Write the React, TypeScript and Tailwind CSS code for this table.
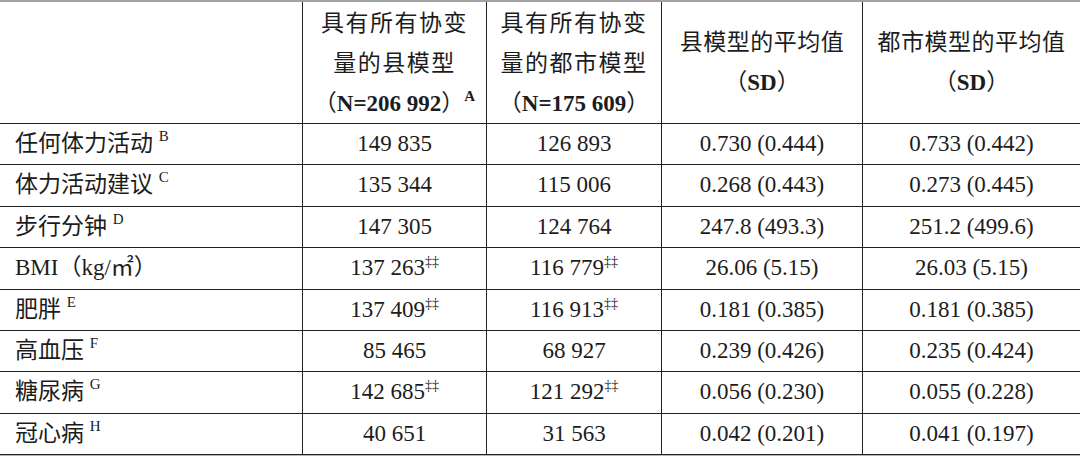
import React from 'react';

const rows = [
  { label: '任何体力活动', note: 'B', county: '149 835', metro: '126 893', cMean: '0.730 (0.444)', mMean: '0.733 (0.442)', h: 'h-[41px]' },
  { label: '体力活动建议', note: 'C', county: '135 344', metro: '115 006', cMean: '0.268 (0.443)', mMean: '0.273 (0.445)', h: 'h-[42px]' },
  { label: '步行分钟', note: 'D', county: '147 305', metro: '124 764', cMean: '247.8 (493.3)', mMean: '251.2 (499.6)', h: 'h-[41px]' },
  { label: 'BMI（kg/㎡）', note: '', county: '137 263', metro: '116 779', dag: true, cMean: '26.06 (5.15)', mMean: '26.03 (5.15)', h: 'h-[42px]' },
  { label: '肥胖', note: 'E', county: '137 409', metro: '116 913', dag: true, cMean: '0.181 (0.385)', mMean: '0.181 (0.385)', h: 'h-[41px]' },
  { label: '高血压', note: 'F', county: '85 465', metro: '68 927', cMean: '0.239 (0.426)', mMean: '0.235 (0.424)', h: 'h-[41px]' },
  { label: '糖尿病', note: 'G', county: '142 685', metro: '121 292', dag: true, cMean: '0.056 (0.230)', mMean: '0.055 (0.228)', h: 'h-[42px]' },
  { label: '冠心病', note: 'H', county: '40 651', metro: '31 563', cMean: '0.042 (0.201)', mMean: '0.041 (0.197)', h: 'h-[41px]' },
];

const font = { fontFamily: '"Liberation Serif", "Noto Sans CJK SC", serif' };

function Dag() {
  return <sup className="text-[14px] top-[-9px]">‡‡</sup>;
}

export default function App() {
  return (
    <div className="w-[1080px] h-[457px] bg-white text-[#1c1c1c] text-[23px]" style={font}>
      <div className="grid grid-cols-[302px_184px_175px_201px_218px] border-t-2 border-t-[#a3a3a3] border-b border-b-[#b5b5b5]">
        {/* header */}
        <div className="h-[122px] border-b border-[#222]" />
        <div className="h-[122px] border-b border-l border-[#222] flex flex-col items-center justify-center pt-[3px] leading-[40px]">
          <div className="tracking-[1.5px]">具有所有协变</div>
          <div className="tracking-[1.5px]">量的县模型</div>
          <div>
            （<b>N=206 992</b>）<sup className="text-[15px] top-[-10px] font-bold">A</sup>
          </div>
        </div>
        <div className="h-[122px] border-b border-l border-[#222] flex flex-col items-center justify-center pt-[3px] leading-[40px]">
          <div className="tracking-[1.5px]">具有所有协变</div>
          <div className="tracking-[1.5px]">量的都市模型</div>
          <div>
            （<b>N=175 609</b>）
          </div>
        </div>
        <div className="h-[122px] border-b border-l border-[#222] flex flex-col items-center justify-center leading-[40px]">
          <div className="tracking-[0.5px]">县模型的平均值</div>
          <div>
            （<b>SD</b>）
          </div>
        </div>
        <div className="h-[122px] border-b border-l border-[#222] flex flex-col items-center justify-center leading-[40px]">
          <div className="tracking-[0.5px]">都市模型的平均值</div>
          <div>
            （<b>SD</b>）
          </div>
        </div>

        {rows.map((r) => {
          const cell = `${r.h} border-b border-[#222] flex items-center`;
          return (
            <React.Fragment key={r.label}>
              <div className={`${cell} pl-[15px]`}>
                <span>
                  {r.label}
                  {r.note && (
                    <>
                      {' '}
                      <sup className="text-[15px] top-[-10px]">{r.note}</sup>
                    </>
                  )}
                </span>
              </div>
              <div className={`${cell} border-l justify-center`}>
                <span>
                  {r.county}
                  {r.dag && <Dag />}
                </span>
              </div>
              <div className={`${cell} border-l justify-center`}>
                <span>
                  {r.metro}
                  {r.dag && <Dag />}
                </span>
              </div>
              <div className={`${cell} border-l justify-center`}>{r.cMean}</div>
              <div className={`${cell} border-l justify-center`}>{r.mMean}</div>
            </React.Fragment>
          );
        })}
      </div>
    </div>
  );
}
